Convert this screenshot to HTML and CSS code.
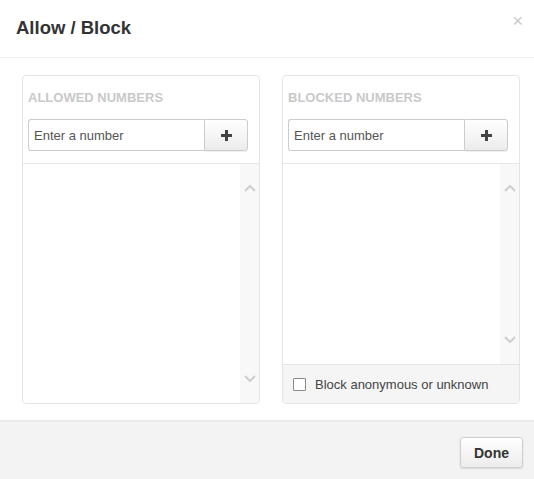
FILE: index.html
```html
<!DOCTYPE html>
<html lang="en">
<head>
<meta charset="utf-8">
<title>Allow / Block</title>
<link rel="stylesheet" href="styles.css">
</head>
<body>
<div class="modal">
  <div class="modal-header">
    <h1 class="modal-title">Allow / Block</h1>
    <span class="close">×</span>
  </div>
  <div class="modal-body">
    <div class="panel">
      <div class="panel-head">
        <div class="panel-title">ALLOWED NUMBERS</div>
        <div class="input-group">
          <input class="num-input" type="text" placeholder="Enter a number">
          <button class="add-btn" type="button"><svg width="11" height="11" viewBox="0 0 11 11"><rect x="4" y="0" width="3" height="11" fill="#444"/><rect x="0" y="4" width="11" height="3" fill="#444"/></svg></button>
        </div>
      </div>
      <div class="list">
        <div class="list-items"></div>
        <div class="scroll">
          <svg class="chev" width="12" height="8" viewBox="0 0 12 8"><polyline points="1,7 6,2 11,7" fill="none" stroke="#cfcfcf" stroke-width="2"/></svg>
          <svg class="chev" width="12" height="8" viewBox="0 0 12 8"><polyline points="1,1 6,6 11,1" fill="none" stroke="#cfcfcf" stroke-width="2"/></svg>
        </div>
      </div>
    </div>
    <div class="panel">
      <div class="panel-head">
        <div class="panel-title">BLOCKED NUMBERS</div>
        <div class="input-group">
          <input class="num-input" type="text" placeholder="Enter a number">
          <button class="add-btn" type="button"><svg width="11" height="11" viewBox="0 0 11 11"><rect x="4" y="0" width="3" height="11" fill="#444"/><rect x="0" y="4" width="11" height="3" fill="#444"/></svg></button>
        </div>
      </div>
      <div class="list">
        <div class="list-items"></div>
        <div class="scroll">
          <svg class="chev" width="12" height="8" viewBox="0 0 12 8"><polyline points="1,7 6,2 11,7" fill="none" stroke="#cfcfcf" stroke-width="2"/></svg>
          <svg class="chev" width="12" height="8" viewBox="0 0 12 8"><polyline points="1,1 6,6 11,1" fill="none" stroke="#cfcfcf" stroke-width="2"/></svg>
        </div>
      </div>
      <label class="panel-foot">
        <span class="checkbox"></span>
        <span class="check-label">Block anonymous or unknown</span>
      </label>
    </div>
  </div>
  <div class="modal-footer">
    <button class="done-btn" type="button">Done</button>
  </div>
</div>
</body>
</html>
```
FILE: styles.css
```css
* { box-sizing: border-box; }
html, body {
  margin: 0;
  padding: 0;
  background: #fff;
  font-family: "Liberation Sans", Arial, sans-serif;
  color: #333;
}
.modal {
  width: 534px;
  height: 479px;
  display: flex;
  flex-direction: column;
  background: #fff;
  overflow: hidden;
}
.modal-header {
  display: flex;
  justify-content: space-between;
  align-items: flex-start;
  padding: 18px 11px 19px 16px;
  border-bottom: 1px solid #efefef;
}
.modal-title {
  margin: 0;
  font-size: 18.5px;
  line-height: 20px;
  font-weight: bold;
  color: #333;
}
.close {
  font-size: 18px;
  line-height: 18px;
  color: #c8c8c8;
  margin-top: -6px;
  margin-right: 0;
}
.modal-body {
  display: flex;
  gap: 22px;
  padding: 17px 14px 16px 22px;
}
.panel {
  width: 238px;
  height: 329px;
  border: 1px solid #e4e4e4;
  border-radius: 4px;
  display: flex;
  flex-direction: column;
  overflow: hidden;
}
.panel-head {
  padding: 14px 11px 12px 5px;
  border-bottom: 1px solid #e8e8e8;
}
.panel-title {
  font-size: 13px;
  line-height: 16px;
  font-weight: bold;
  color: #c9c9c9;
  margin-bottom: 13px;
}
.input-group {
  display: flex;
  height: 32px;
}
.num-input {
  flex: 1;
  min-width: 0;
  height: 32px;
  border: 1px solid #cccccc;
  border-right: none;
  border-radius: 3px 0 0 3px;
  padding: 0 5px;
  font-family: "Liberation Sans", Arial, sans-serif;
  font-size: 13px;
  color: #555;
  outline: none;
}
.num-input::placeholder { color: #555; }
.add-btn {
  width: 44px;
  height: 32px;
  border: 1px solid #cccccc;
  border-radius: 0 3px 3px 0;
  background: linear-gradient(#ffffff, #ececec);
  box-shadow: 0 1px 1px rgba(0,0,0,0.06);
  display: flex;
  align-items: center;
  justify-content: center;
  padding: 0;
}
.add-btn svg { display: block; }
.list {
  flex: 1;
  display: flex;
  min-height: 0;
}
.list-items { flex: 1; }
.scroll {
  width: 19px;
  background: #f8f8f8;
  display: flex;
  flex-direction: column;
  justify-content: space-between;
  align-items: center;
  padding: 20px 0 20px;
}
.chev { display: block; }
.panel-foot {
  height: 39px;
  background: #f5f5f5;
  border-top: 1px solid #e4e4e4;
  display: flex;
  align-items: center;
  padding-left: 10px;
}
.checkbox {
  width: 13px;
  height: 13px;
  border: 1px solid #8a8a8a;
  background: #fff;
  border-radius: 1px;
  margin-right: 9px;
}
.check-label {
  font-size: 13px;
  color: #444;
}
.modal-footer {
  flex: 1;
  background: #f3f3f3;
  border-top: 2px solid #e9e9e9;
  display: flex;
  justify-content: flex-end;
  align-items: flex-start;
  padding: 15px 11px 0 0;
}
.done-btn {
  width: 63px;
  height: 31px;
  border: 1px solid #cfcfcf;
  border-radius: 3px;
  background: linear-gradient(#ffffff, #ececec);
  box-shadow: 0 1px 2px rgba(0,0,0,0.12);
  font-family: "Liberation Sans", Arial, sans-serif;
  font-size: 14px;
  font-weight: bold;
  color: #333;
  padding: 0;
}
```
